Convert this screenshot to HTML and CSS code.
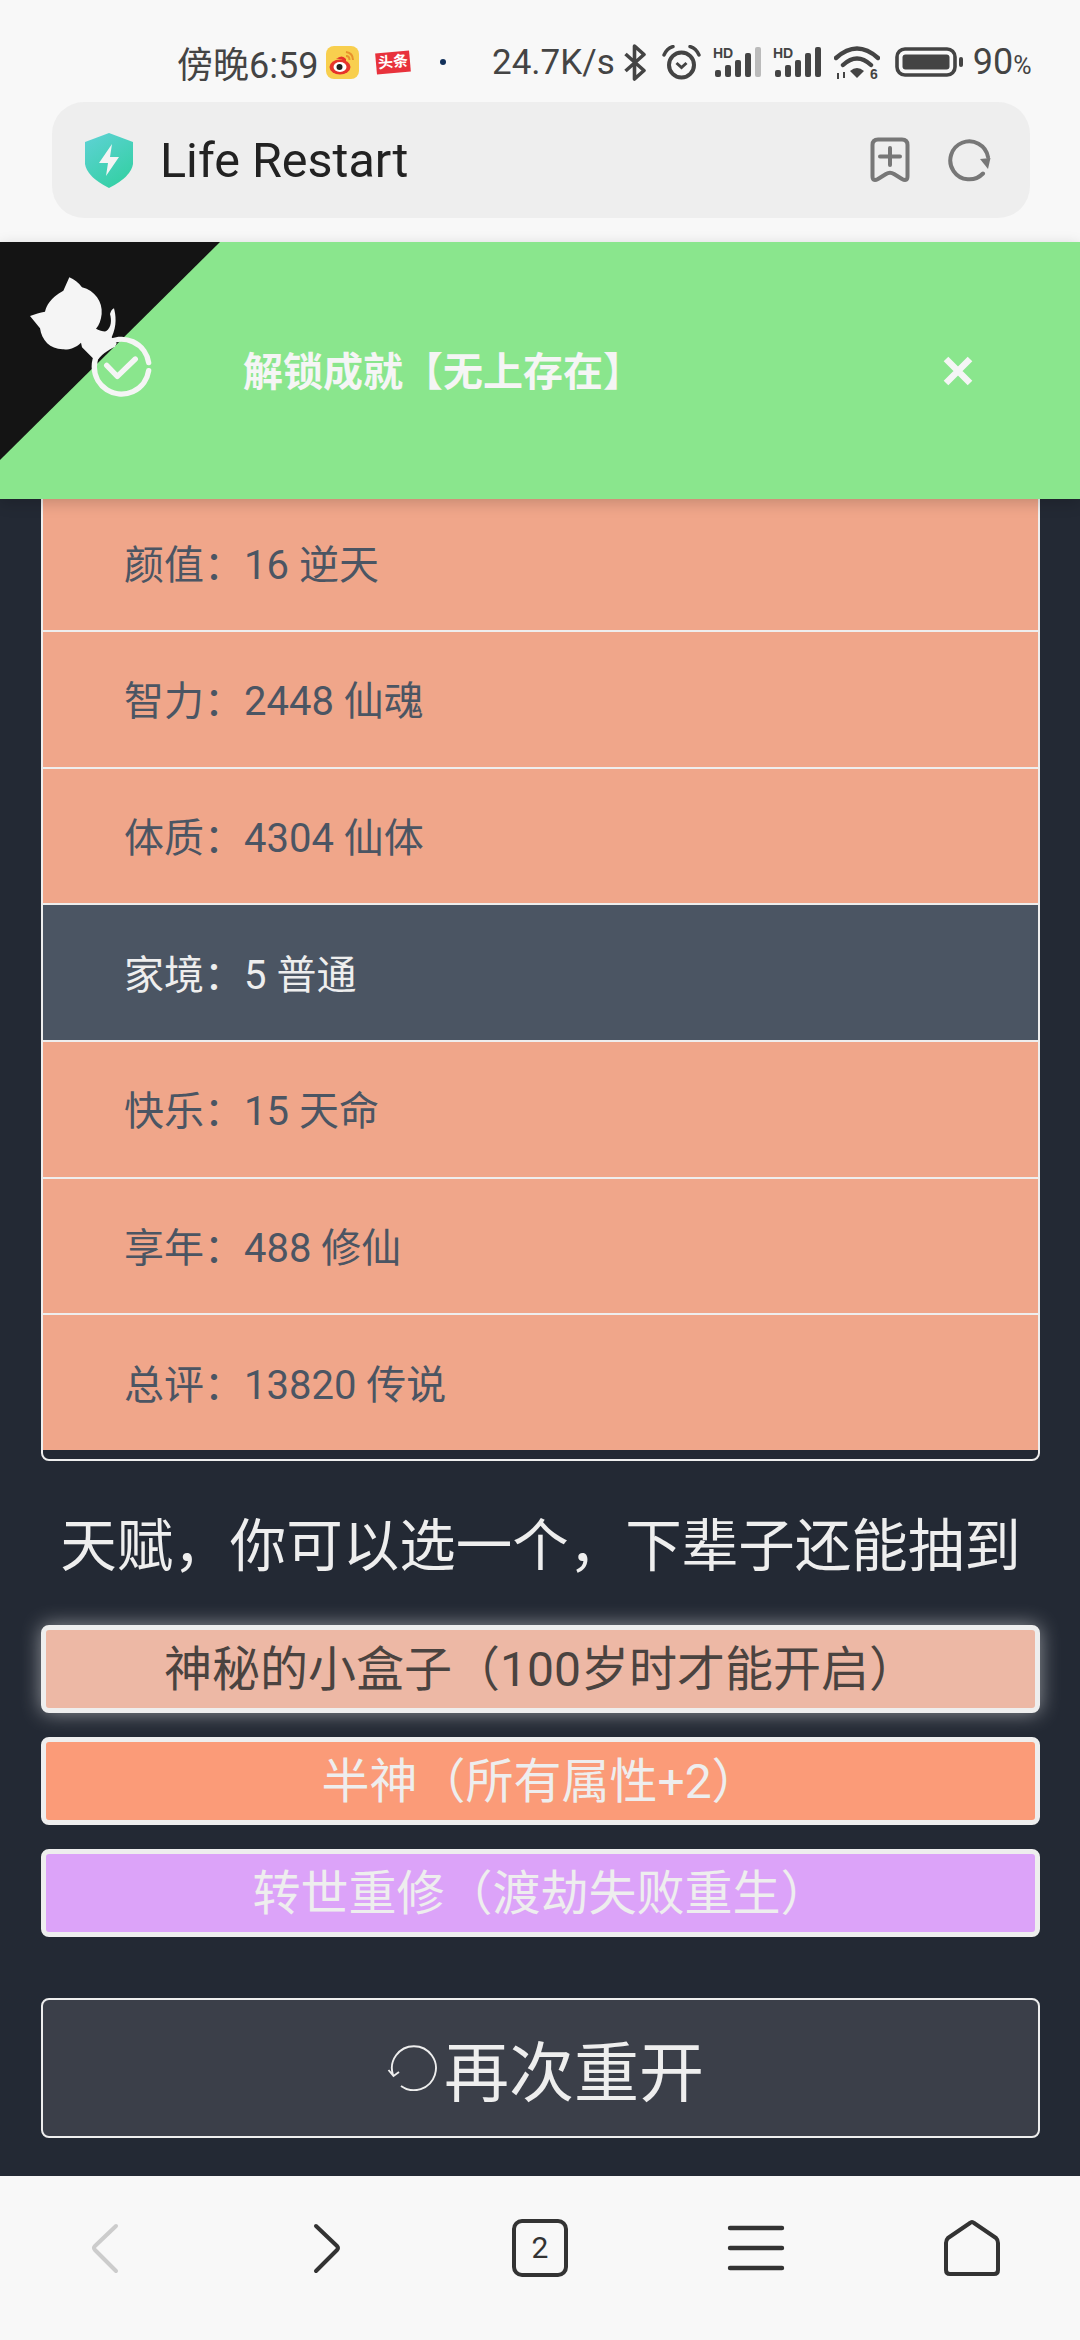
FILE: index.html
```html
<!DOCTYPE html>
<html lang="zh-CN">
<head>
    <meta charset="UTF-8">
    <meta name="viewport" content="width=device-width, initial-scale=1.0">
    <title>Life Restart</title>
    <link rel="stylesheet" href="styles.css">
</head>

<body>
    <div class="page">
        <header class="top">
            <div class="status">
                <span class="time">傍晚6:59</span>
                <svg class="ic-weibo" width="33" height="33" viewBox="0 0 33 33">
                    <rect width="33" height="33" rx="8" fill="#f8cf4e"/>
                    <ellipse cx="14" cy="21" rx="10.5" ry="7.5" fill="#e6332a"/>
                    <path d="M20 13 Q16 8 10 13 Q14 12 20 16 Z" fill="#e6332a"/>
                    <ellipse cx="14" cy="21" rx="6.5" ry="5" fill="#fff"/>
                    <circle cx="13.5" cy="21" r="3" fill="#222"/>
                    <path d="M20 6 Q27 7 27 14 M20 10 Q23.5 10 23.5 14" fill="none" stroke="#e8912c" stroke-width="2"/>
                </svg>
                <span class="toutiao">头条</span>
                <span class="dot"></span>
                <span class="speed">24.7K/s</span>
                <svg class="ic-bt" width="24" height="37" viewBox="0 0 24 37">
                    <path d="M2.5 10 L21 26.5 L11.5 35 V2 L21 10.5 L2.5 27" fill="none" stroke="#444" stroke-width="3.6" stroke-linejoin="round"/>
                </svg>
                <svg class="ic-alarm" width="39" height="35" viewBox="0 0 39 35">
                    <circle cx="19.5" cy="20" r="12.5" fill="none" stroke="#444" stroke-width="4"/>
                    <path d="M14.5 18 L19.5 22.5 L24.5 18" fill="none" stroke="#444" stroke-width="3"/>
                    <path d="M2 10 Q5 3 11 1.5 M37 10 Q34 3 28 1.5" fill="none" stroke="#444" stroke-width="3.4" stroke-linecap="round"/>
                </svg>
                <svg class="ic-signal" width="48" height="32" viewBox="0 0 48 32">
                    <text class="svg-hd" x="0" y="12">HD</text>
                    <rect x="2" y="24" width="6" height="7" rx="2" fill="#444"/>
                    <rect x="12" y="19" width="6" height="12" rx="2" fill="#444"/>
                    <rect x="22" y="14" width="6" height="17" rx="2" fill="#444"/>
                    <rect x="32" y="7" width="6" height="24" rx="2" fill="#444"/>
                    <rect x="42" y="1" width="6" height="30" rx="2" fill="#bbb"/>
                </svg>
                <svg class="ic-signal ic-signal2" width="48" height="32" viewBox="0 0 48 32">
                    <text class="svg-hd" x="0" y="12">HD</text>
                    <rect x="2" y="24" width="6" height="7" rx="2" fill="#444"/>
                    <rect x="12" y="19" width="6" height="12" rx="2" fill="#444"/>
                    <rect x="22" y="14" width="6" height="17" rx="2" fill="#444"/>
                    <rect x="32" y="7" width="6" height="24" rx="2" fill="#444"/>
                    <rect x="42" y="1" width="6" height="30" rx="2" fill="#444"/>
                </svg>
                <svg class="ic-wifi" width="46" height="35" viewBox="0 0 46 35">
                    <path d="M2 13 Q23 -6 44 13 M9 20 Q23 7 37 20" fill="none" stroke="#444" stroke-width="4.4" stroke-linecap="round"/>
                    <path d="M16 26 Q23 20 30 26 L23 33 Z" fill="#444"/>
                    <path d="M4 28 V34 M10 27 V33" stroke="#444" stroke-width="2"/>
                    <text class="svg-six" x="36" y="34">6</text>
                </svg>
                <svg class="ic-battery" width="68" height="30" viewBox="0 0 68 30">
                    <rect x="2" y="2" width="58" height="26" rx="8" fill="none" stroke="#444" stroke-width="3.6"/>
                    <rect x="7.5" y="7.5" width="47" height="15" rx="3" fill="#444"/>
                    <rect x="64" y="10" width="4" height="10" rx="2" fill="#444"/>
                </svg>
                <span class="batt-num">90<small>%</small></span>
            </div>
            <div class="address">
                <svg class="shield" width="48" height="55" viewBox="0 0 48 55">
                    <defs>
                        <linearGradient id="shieldGrad" x1="0" y1="0" x2="0.6" y2="1">
                            <stop offset="0" stop-color="#5fd2d6"/>
                            <stop offset="1" stop-color="#36d0a6"/>
                        </linearGradient>
                    </defs>
                    <path d="M24 0 L48 9 V31 Q46 44 24 55 Q2 44 0 31 V9 Z" fill="url(#shieldGrad)"/>
                    <path d="M27 11 L14 30 H23 L21 43 L34 24 H25 Z" fill="#f4f4f4"/>
                </svg>
                <span class="site-name">Life Restart</span>
                <svg class="bookmark" width="40" height="46" viewBox="0 0 40 46">
                    <path d="M2.5 8 Q2.5 2.5 8 2.5 H32 Q37.5 2.5 37.5 8 V39 Q37.5 45 32 42 L24 37 Q20 34.5 16 37 L8 42 Q2.5 45 2.5 39 Z M20 11 V28 M10 19.5 H30" fill="none" stroke="#777" stroke-width="4" stroke-linecap="round"/>
                </svg>
                <svg class="reload" width="44" height="44" viewBox="0 0 44 44">
                    <path d="M41 19 A19 19 0 1 0 36 35.5" fill="none" stroke="#777" stroke-width="4" stroke-linecap="round"/>
                    <path d="M33 21 L43.5 20 L41 31 Z" fill="#777"/>
                </svg>
            </div>
        </header>

        <main class="main">
            <div class="summary">
                <div class="row grade-high">颜值：16 逆天</div>
                <div class="row grade-high">智力：2448 仙魂</div>
                <div class="row grade-high">体质：4304 仙体</div>
                <div class="row grade-low">家境：5 普通</div>
                <div class="row grade-high">快乐：15 天命</div>
                <div class="row grade-high">享年：488 修仙</div>
                <div class="row grade-high">总评：13820 传说</div>
            </div>
            <h2 class="talent-title">天赋，你可以选一个，下辈子还能抽到</h2>
            <div class="talents">
                <button class="talent talent-picked">神秘的小盒子（100岁时才能开启）</button>
                <button class="talent talent-orange">半神（所有属性+2）</button>
                <button class="talent talent-purple">转世重修（渡劫失败重生）</button>
            </div>
            <button class="again">
                <svg class="again-icon" width="50" height="46" viewBox="0 0 50 46">
                    <path d="M6 30 A22 22 0 1 1 14 41 M1.5 25 L6.5 31 L12 27" fill="none" stroke="#eee" stroke-width="1.9"/>
                </svg>
                再次重开
            </button>
        </main>

        <nav class="nav">
            <div class="nav-item">
                <svg width="64" height="64" viewBox="0 0 64 64">
                    <path d="M40 10 L19 30 Q17 32 19 34 L40 55" fill="none" stroke="#ccc" stroke-width="4" stroke-linecap="round"/>
                </svg>
            </div>
            <div class="nav-item">
                <svg width="64" height="64" viewBox="0 0 64 64">
                    <path d="M24 10 L45 30 Q47 32 45 34 L24 55" fill="none" stroke="#333" stroke-width="4" stroke-linecap="round"/>
                </svg>
            </div>
            <div class="nav-item"><span class="tab-count">2</span></div>
            <div class="nav-item">
                <svg width="64" height="64" viewBox="0 0 64 64">
                    <path d="M6 12 H58 M6 32 H58 M6 52 H58" fill="none" stroke="#333" stroke-width="4.4" stroke-linecap="round"/>
                </svg>
            </div>
            <div class="nav-item">
                <svg width="64" height="64" viewBox="0 0 64 64">
                    <path d="M30 7 Q32 5 34 7 L56 22 Q58 24 58 27 V54 Q58 58 54 58 H10 Q6 58 6 54 V27 Q6 24 8 22 Z" fill="none" stroke="#333" stroke-width="4" stroke-linejoin="round"/>
                </svg>
            </div>
        </nav>

        <div class="toast">
            <svg class="toast-corner" width="240" height="257" viewBox="0 6 720 771">
                <polygon points="0,6 660,6 0,660" fill="#141414"/>
                <path d="M208 112 C222 118 236 128 246 142 C285 152 308 185 305 222 C303 240 298 255 288 266 C300 272 310 275 318 274 C335 262 335 240 330 222 C333 212 337 207 342 205 C347 225 352 255 335 292 L350 310 L345 320 C325 330 300 345 290 366 L246 322 L243 308 C225 325 205 330 188 328 C150 328 125 300 120 265 L90 228 C105 222 120 218 135 215 C140 195 150 175 190 152 Z" fill="#f5f5f5"/>
                <path d="M446 368 A82 82 0 1 0 446 392" fill="none" stroke="#f5f5f5" stroke-width="16" stroke-linecap="round"/>
                <path d="M320 376 L352 409 L406 357" fill="none" stroke="#f5f5f5" stroke-width="16" stroke-linecap="round" stroke-linejoin="round"/>
            </svg>
            <span class="toast-text">解锁成就【无上存在】</span>
            <svg class="toast-close" width="32" height="32" viewBox="0 0 32 32">
                <path d="M4 4 L28 28 M28 4 L4 28" fill="none" stroke="#f5f5f5" stroke-width="6.5"/>
            </svg>
        </div>
    </div>
</body>
</html>
```

FILE: styles.css
```css
* {
    box-sizing: border-box;
}
body {
    margin: 0;
    font-family: Roboto, "Noto Sans CJK SC", sans-serif;
    background-color: #f8f8f8;
}
.page {
    position: relative;
    width: 1080px;
    height: 2340px;
    overflow: hidden;
    display: flex;
    flex-direction: column;
}

/* status bar + address bar */
.top {
    height: 242px;
    flex: none;
    background-color: #f8f8f8;
}
.status {
    height: 102px;
    padding: 22px 0 0 177px;
    display: flex;
    align-items: center;
    color: #444;
    font-size: 36px;
}
.time {
    width: 149px;
    white-space: nowrap;
}
.toutiao {
    width: 34px;
    height: 21px;
    margin-left: 17px;
    background-color: #e8323c;
    color: #fff;
    font-size: 15px;
    font-weight: 700;
    line-height: 21px;
    text-align: center;
    transform: rotate(-5deg);
}
.dot {
    width: 6px;
    height: 6px;
    margin-left: 30px;
    border-radius: 50%;
    background-color: #12305a;
}
.speed {
    margin: 0 8px 0 46px;
    font-size: 35px;
    white-space: nowrap;
}
.ic-alarm {
    margin-left: 15px;
}
.ic-signal {
    margin-left: 12px;
}
.ic-wifi {
    margin-left: 13px;
}
.ic-battery {
    margin-left: 15px;
}
.batt-num {
    margin-left: 10px;
}
.batt-num small {
    font-size: 25px;
}
.svg-hd {
    font-family: "Liberation Sans", sans-serif;
    font-size: 14px;
    font-weight: 700;
    fill: #444;
}
.svg-six {
    font-family: "Liberation Sans", sans-serif;
    font-size: 14px;
    font-weight: 700;
    fill: #444;
}
.address {
    height: 116px;
    margin: 0 50px 0 52px;
    padding-left: 33px;
    display: flex;
    align-items: center;
    background-color: #eeeeee;
    border-radius: 32px;
}
.site-name {
    margin-left: 27px;
    font-size: 48.5px;
    color: #222;
}
.bookmark {
    margin-left: auto;
}
.reload {
    margin: 0 39px 0 37px;
}

/* page content */
.main {
    flex: 1;
    min-height: 0;
    padding: 0 40px 38px 41px;
    display: flex;
    flex-direction: column;
    justify-content: flex-end;
    background-color: #232934;
}
.summary {
    padding-bottom: 9px;
    border: 2px solid #eee;
    border-radius: 8px;
}
.row {
    height: 136.7px;
    padding: 0 0 2px 81px;
    display: flex;
    align-items: center;
    font-size: 40px;
    border-top: 2px solid #eee;
}
.grade-high {
    background-color: #f0a68a;
    color: #4b5563;
}
.grade-low {
    background-color: #4b5563;
    color: #eee;
}
.talent-title {
    margin: 48px 0 40px;
    font-size: 56.5px;
    font-weight: 400;
    line-height: 76px;
    color: #eee;
    text-align: center;
    white-space: nowrap;
}
.talents {
    display: flex;
    flex-direction: column;
    gap: 24px;
}
.talent {
    height: 88px;
    padding: 0 0 8px;
    border: 5px solid #eee;
    border-radius: 8px;
    font-family: inherit;
    font-size: 48px;
    color: #eee;
}
.talent-picked {
    background-color: #edb8a5;
    color: #4a4340;
    box-shadow: 0 0 20px rgba(255, 255, 255, 0.5);
}
.talent-orange {
    background-color: #fb9b78;
}
.talent-purple {
    background-color: #dca3f9;
}
.again {
    height: 140px;
    margin-top: 61px;
    padding: 0 0 0 10px;
    display: flex;
    align-items: center;
    justify-content: center;
    border: 2px solid #eee;
    border-radius: 8px;
    background-color: #3b3f49;
    font-family: inherit;
    font-size: 65px;
    color: #eee;
}
.again-icon {
    margin-right: 7px;
}

/* browser toolbar */
.nav {
    height: 164px;
    flex: none;
    padding-top: 40px;
    display: flex;
    align-items: flex-start;
    background-color: #f8f8f8;
}
.nav-item {
    flex: 1;
    height: 64px;
    display: flex;
    align-items: center;
    justify-content: center;
}
.tab-count {
    width: 56px;
    height: 58px;
    border: 4px solid #333;
    border-radius: 10px;
    font-size: 30px;
    line-height: 50px;
    text-align: center;
    color: #333;
}

/* achievement toast, lies over the page */
.toast {
    position: absolute;
    top: 242px;
    left: 0;
    right: 0;
    height: 257px;
    padding: 0 106px 0 243px;
    display: flex;
    align-items: center;
    justify-content: space-between;
    background-color: #8ae68d;
    box-shadow: 0 4px 14px rgba(0, 0, 0, 0.18);
}
.toast-corner {
    position: absolute;
    top: 0;
    left: 0;
}
.toast-text {
    margin-bottom: 3px;
    font-size: 40px;
    font-weight: 700;
    color: #f5f5f5;
}
```
